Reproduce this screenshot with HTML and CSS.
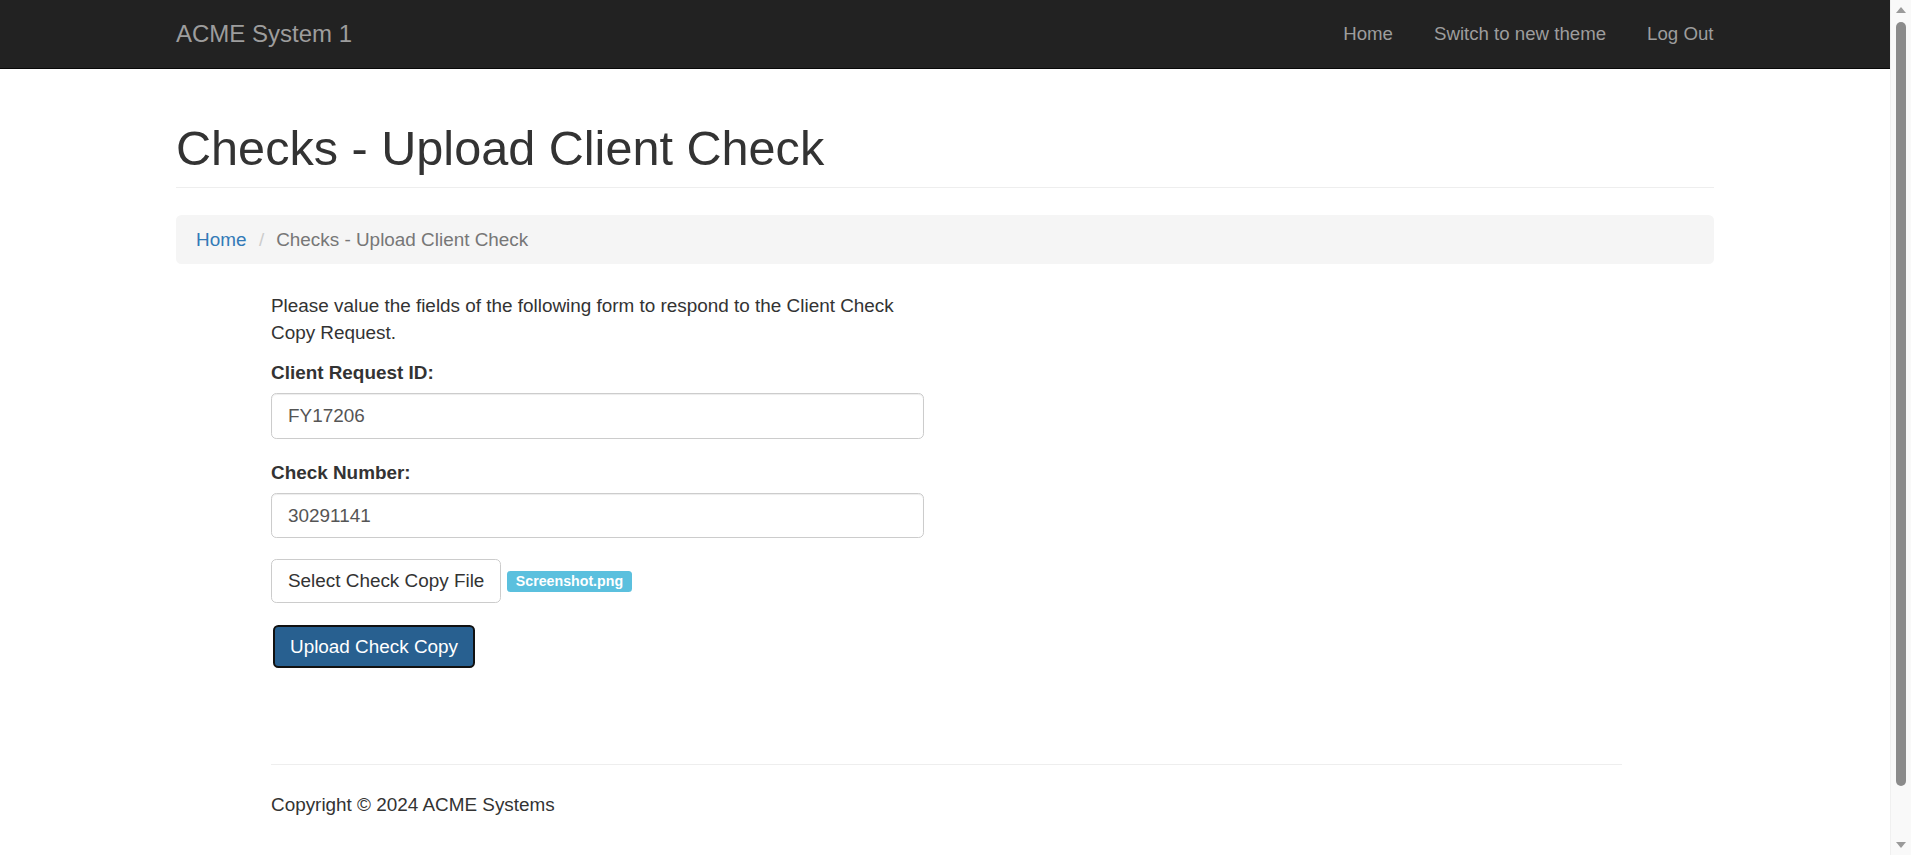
FILE: index.html
```html
<!DOCTYPE html>
<html lang="en">
<head>
<meta charset="utf-8">
<title>Checks - Upload Client Check</title>
<link rel="stylesheet" href="styles.css">
</head>
<body>
<nav class="navbar">
  <div class="container nav-inner">
    <a class="brand" href="#">ACME System 1</a>
    <ul class="nav-links">
      <li><a href="#">Home</a></li>
      <li><a href="#">Switch to new theme</a></li>
      <li><a href="#">Log Out</a></li>
    </ul>
  </div>
</nav>
<div class="container main">
  <div class="page-header"><h1>Checks - Upload Client Check</h1></div>
  <ol class="breadcrumb">
    <li><a href="#">Home</a></li>
    <li class="active">Checks - Upload Client Check</li>
  </ol>
  <div class="content">
    <form class="upload-form">
      <p class="intro">Please value the fields of the following form to respond to the Client Check Copy Request.</p>
      <div class="form-group">
        <label class="field-label" for="req">Client Request ID:</label>
        <input class="form-control" id="req" type="text" value="FY17206">
      </div>
      <div class="form-group">
        <label class="field-label" for="num">Check Number:</label>
        <input class="form-control" id="num" type="text" value="30291141">
      </div>
      <div class="file-group">
        <span class="btn btn-default">Select Check Copy File</span>
        <span class="file-badge">Screenshot.png</span>
      </div>
      <button class="btn btn-primary" type="button">Upload Check Copy</button>
    </form>
    <hr class="footer-rule">
    <footer class="footer">
      <p>Copyright © 2024 ACME Systems</p>
    </footer>
  </div>
</div>
<div class="scrollbar" aria-hidden="true">
  <span class="sb-arrow sb-up"></span>
  <span class="sb-thumb"></span>
  <span class="sb-arrow sb-down"></span>
</div>
</body>
</html>
```
FILE: styles.css
```css
* { box-sizing: border-box; }

html, body {
  margin: 0;
  padding: 0;
}

body {
  margin-right: 21px;
  font-family: "Liberation Sans", Arial, Helvetica, sans-serif;
  font-size: 18.9px;
  line-height: 26.67px;
  color: #333;
  background: #fff;
}

a { text-decoration: none; }

.container {
  width: 1578px;
  margin: 0 auto;
  padding: 0 20px;
}

/* Navbar */
.navbar {
  background: #222;
  border-bottom: 1px solid #080808;
  height: 69px;
}

.nav-inner {
  display: flex;
  align-items: center;
  justify-content: space-between;
  height: 68px;
}

.brand {
  color: #9d9d9d;
  font-size: 24px;
  line-height: 26.67px;
}

.nav-links {
  list-style: none;
  display: flex;
  margin: 0 -20px 0 0;
  padding: 0;
}

.nav-links a {
  display: block;
  padding: 0 20.5px;
  color: #9d9d9d;
  font-size: 18.67px;
  line-height: 26.67px;
}

/* Header */
.main {
  padding-bottom: 72px;
}

.page-header {
  margin: 53.33px 0 26.67px;
  padding-bottom: 12px;
  border-bottom: 1px solid #eee;
}

.page-header h1 {
  margin: 0;
  font-size: 48.6px;
  font-weight: 500;
  line-height: 52.8px;
  color: #333;
}

/* Breadcrumb */
.breadcrumb {
  list-style: none;
  margin: 0 0 26.67px;
  padding: 11px 20px;
  line-height: 27px;
  background: #f5f5f5;
  border-radius: 5.33px;
  display: flex;
}

.breadcrumb li + li {
  margin-left: 6px;
}

.breadcrumb li + li::before {
  content: "/\00a0";
  padding: 0 6.67px;
  color: #ccc;
}

.breadcrumb a { color: #337ab7; }
.breadcrumb .active { color: #777; }

/* Form */
.content {
  margin-left: 95px;
  width: 1351px;
  padding-top: 3px;
}

.upload-form {
  width: 653px;
}

.intro {
  margin: 0 0 13.33px;
}

.form-group {
  margin-bottom: 21px;
}

.field-label {
  display: block;
  font-weight: bold;
  margin-bottom: 6.67px;
}

.form-control {
  display: block;
  width: 100%;
  height: 45.33px;
  padding: 8px 16px;
  font-family: inherit;
  font-size: 18.9px;
  line-height: 26.67px;
  color: #555;
  background: #fff;
  border: 1px solid #ccc;
  border-radius: 5.33px;
  box-shadow: inset 0 1px 1px rgba(0, 0, 0, .075);
}

.file-group {
  display: flex;
  align-items: center;
  gap: 6px;
  margin-top: 1px;
  margin-bottom: 22px;
}

.btn {
  display: inline-block;
  padding: 8px 16px;
  font-family: inherit;
  font-size: 18.9px;
  line-height: 26.67px;
  border: 1px solid transparent;
  border-radius: 5.33px;
  cursor: pointer;
}

.btn-default {
  color: #333;
  background: #fff;
  border-color: #ccc;
  height: 44px;
}

.btn-primary {
  color: #fff;
  background: #286090;
  border: 2px solid #111;
  height: 43px;
  padding: 6px 15px;
  margin-left: 2px;
}

.file-badge {
  display: inline-block;
  padding: 3px 8.5px 4px;
  font-size: 14.2px;
  font-weight: bold;
  line-height: 14px;
  color: #fff;
  background: #5bc0de;
  border-radius: 3.5px;
}

/* Footer */
.footer-rule {
  margin: 96px 0 26.67px;
  border: 0;
  border-top: 1px solid #eee;
}

.footer p {
  margin: 0 0 13.33px;
}

/* Browser scrollbar as shown in the capture */
.scrollbar {
  position: fixed;
  top: 0;
  right: 0;
  width: 21px;
  height: 100vh;
  background: #f9f9f9;
  border-left: 1px solid #f0f0f0;
}

.sb-thumb {
  position: absolute;
  top: 22px;
  left: 5px;
  width: 10px;
  height: 764px;
  border-radius: 5px;
  background: #8b8b8b;
}

.sb-arrow {
  position: absolute;
  left: 5px;
  width: 0;
  height: 0;
  border-left: 5px solid transparent;
  border-right: 5px solid transparent;
}

.sb-up {
  top: 7px;
  border-bottom: 6px solid #9a9a9a;
}

.sb-down {
  bottom: 7px;
  border-top: 6px solid #9a9a9a;
}
```
